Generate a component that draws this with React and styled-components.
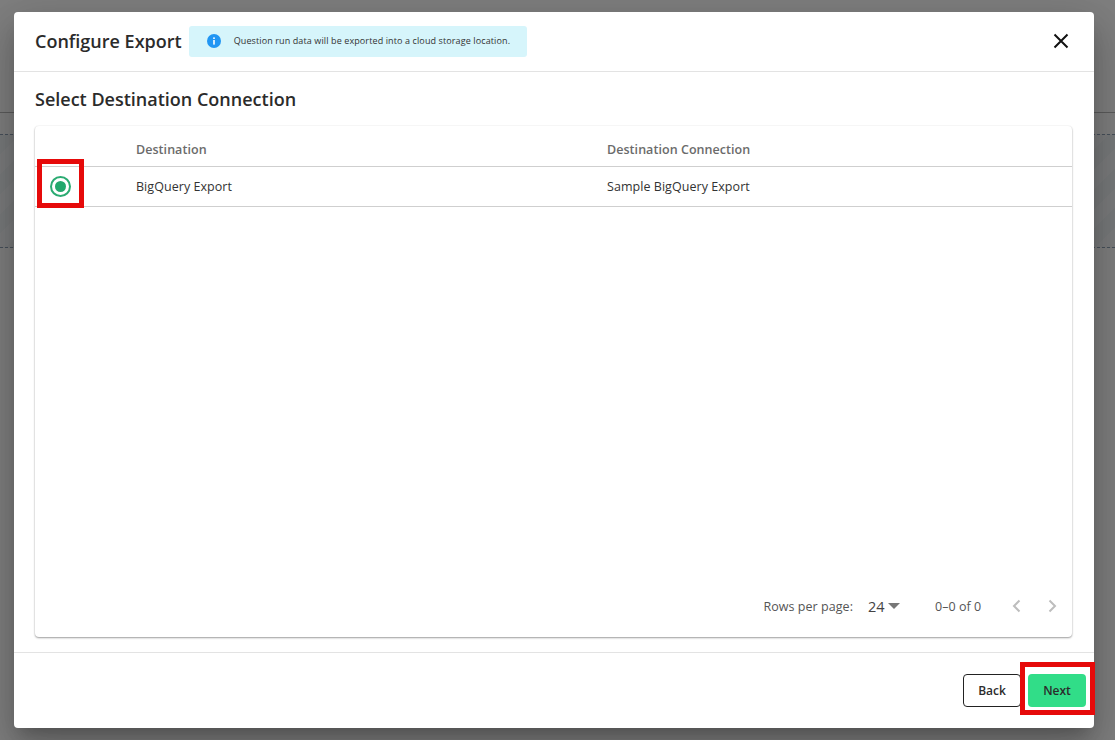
import React from 'react';
import styled, { createGlobalStyle } from 'styled-components';

const Global = createGlobalStyle`
  html, body { margin: 0; padding: 0; height: 100%; overflow: hidden; }
  body { font-family: "Open Sans", "Liberation Sans", sans-serif; color: #212529; background: #7f7f7f; }
  * { box-sizing: border-box; }
`;
const Page = styled.div`
  position: relative; width: 1115px; height: 740px; overflow: hidden; background: #7f7f7f;
`;
const BackLines = styled.div`
  position: absolute; inset: 0; display: flex; flex-direction: column; padding-top: 112px;
`;
const TopRule = styled.div`height: 1px; background: #5c5c5c;`;
const Band = styled.div`
  margin-top: 21px; height: 114px; position: relative;
  border-top: 1px dashed #47505a; border-bottom: 1px dashed #47505a;
  background: repeating-linear-gradient(135deg, #787a7b 0 14px, #7b7c7d 14px 28px);
`;
const Modal = styled.div`
  position: absolute; left: 14px; top: 12px; width: 1080px; height: 716px;
  display: flex; flex-direction: column; background: #fff; border-radius: 4px;
  box-shadow: 0 11px 15px -7px rgba(0,0,0,.2), 0 24px 38px 3px rgba(0,0,0,.14), 0 9px 46px 8px rgba(0,0,0,.12);
`;
const Header = styled.header`
  height: 60px; flex: none; display: flex; align-items: center; padding: 0 24px 2px 21px;
  border-bottom: 1px solid #e3e3e3;
`;
const Title = styled.h2`
  margin: 0; font-size: 18px; font-weight: 600; line-height: 24px; color: #2b2b2b; white-space: nowrap;
`;
const Notice = styled.div`
  margin: 2px 0 0 7px; width: 338px; height: 31px; display: flex; align-items: center; gap: 13px; padding: 0 16px 2px 18px;
  background: #d6f5fb; border-radius: 3px; font-size: 9px; color: #333; white-space: nowrap; letter-spacing: .11px;
`;
const CloseBtn = styled.button`
  margin-left: auto; width: 18px; height: 18px; padding: 0; border: 0; background: none; display: flex; cursor: pointer;
`;
const Body = styled.div`
  flex: 1; min-height: 0; display: flex; flex-direction: column; padding: 15px 22px 15px 21px;
  border-bottom: 1px solid #e3e3e3;
`;
const SubTitle = styled.h3`
  margin: 0 0 15px; font-size: 18px; font-weight: 600; line-height: 24px; color: #2b2b2b;
`;
const Card = styled.section`
  flex: 1; display: flex; flex-direction: column; border-radius: 4px; background: #fff;
  box-shadow: 0 1px 2px rgba(0,0,0,.38), 0 0 2px rgba(0,0,0,.07);
`;
const Row = styled.div`
  display: grid; grid-template-columns: 101px 471px 1fr; align-items: center; flex: none;
  height: ${p => p.$h}px; padding-top: ${p => (p.$head ? 6 : 0)}px; border-bottom: 1px solid #cfcfcf; font-size: 12.5px; letter-spacing: .05px;
  font-weight: ${p => (p.$head ? 600 : 400)}; color: ${p => (p.$head ? '#6b6b6b' : '#333')};
`;
const RadioCell = styled.div`display: flex; align-items: center; padding-left: 15px;`;
const Radio = styled.span`
  width: 21px; height: 21px; border-radius: 50%; border: 2px solid #2bab72; display: flex; align-items: center; justify-content: center;
  &::after { content: ''; width: 11px; height: 11px; border-radius: 50%; background: #22a86c; }
`;
const Highlight = styled.div`
  position: absolute; border: 5px solid #e60a0a; pointer-events: none;
  left: ${p => p.$x}px; top: ${p => p.$y}px; width: ${p => p.$w}px; height: ${p => p.$h}px;
`;
const Pager = styled.div`
  margin-top: auto; height: 62px; display: flex; align-items: center; justify-content: flex-end; font-size: 12.5px; letter-spacing: .05px; color: #555; padding: 0 12px 0 0;
`;
const PageSize = styled.span`
  margin-left: 15px; width: 34px; font-size: 14.5px; letter-spacing: 0; color: #444; display: flex; align-items: center; gap: 3px;
`;
const Range = styled.span`margin-left: 33px; width: 46px; white-space: nowrap;`;
const PageNav = styled.span`margin-left: 28px; display: flex; gap: 19px; color: #bdbdbd;`;
const Footer = styled.footer`
  height: 75px; flex: none; display: flex; align-items: center; justify-content: flex-end; gap: 7px; padding: 0 8px 0 0;
`;
const Button = styled.button`
  height: 33px; width: ${p => p.$w}px; border-radius: 4px; padding: 0; font: 600 12px "Open Sans", sans-serif; color: #2b2b2b; cursor: pointer;
  background: ${p => (p.$primary ? '#31dd88' : '#fff')};
  border: ${p => (p.$primary ? '0' : '1px solid #222')};
`;

const Chevron = ({ d }) => (
  <svg width="16" height="16" viewBox="0 0 16 16" fill="none" stroke="currentColor" strokeWidth="2"><path d={d} /></svg>
);

export default function App() {
  return (
    <Page>
      <Global />
      <BackLines>
        <TopRule />
        <Band />
      </BackLines>
      <Modal>
        <Header>
          <Title>Configure Export</Title>
          <Notice>
            <svg width="14" height="14" viewBox="0 0 14 14" style={{ flex: 'none' }}>
              <circle cx="7" cy="7" r="7" fill="#2196f3" />
              <rect x="6.2" y="6" width="1.6" height="4.6" fill="#fff" />
              <rect x="6.2" y="3.4" width="1.6" height="1.6" fill="#fff" />
            </svg>
            Question run data will be exported into a cloud storage location.
          </Notice>
          <CloseBtn aria-label="Close">
            <svg width="18" height="18" viewBox="0 0 18 18" fill="none" stroke="#111" strokeWidth="2"><path d="M2.5 2.5l13 13M15.5 2.5l-13 13" /></svg>
          </CloseBtn>
        </Header>
        <Body>
          <SubTitle>Select Destination Connection</SubTitle>
          <Card>
            <Row $head $h={41}>
              <span />
              <span>Destination</span>
              <span>Destination Connection</span>
            </Row>
            <Row $h={40}>
              <RadioCell><Radio /></RadioCell>
              <span>BigQuery Export</span>
              <span>Sample BigQuery Export</span>
            </Row>
            <Pager>
              Rows per page:
              <PageSize>24<svg width="12" height="6" viewBox="0 0 12 6" style={{ flex: 'none' }}><path d="M0 0h12L6 6z" fill="#777" /></svg></PageSize>
              <Range>0–0 of 0</Range>
              <PageNav>
                <Chevron d="M10.5 2.5L5 8l5.5 5.5" />
                <Chevron d="M5.5 2.5L11 8l-5.5 5.5" />
              </PageNav>
            </Pager>
          </Card>
        </Body>
        <Footer>
          <Button $w={58}>Back</Button>
          <Button $primary $w={58}>Next</Button>
        </Footer>
      </Modal>
      <Highlight $x={37} $y={159} $w={47} $h={49} />
      <Highlight $x={1020} $y={662} $w={75} $h={53} />
    </Page>
  );
}
